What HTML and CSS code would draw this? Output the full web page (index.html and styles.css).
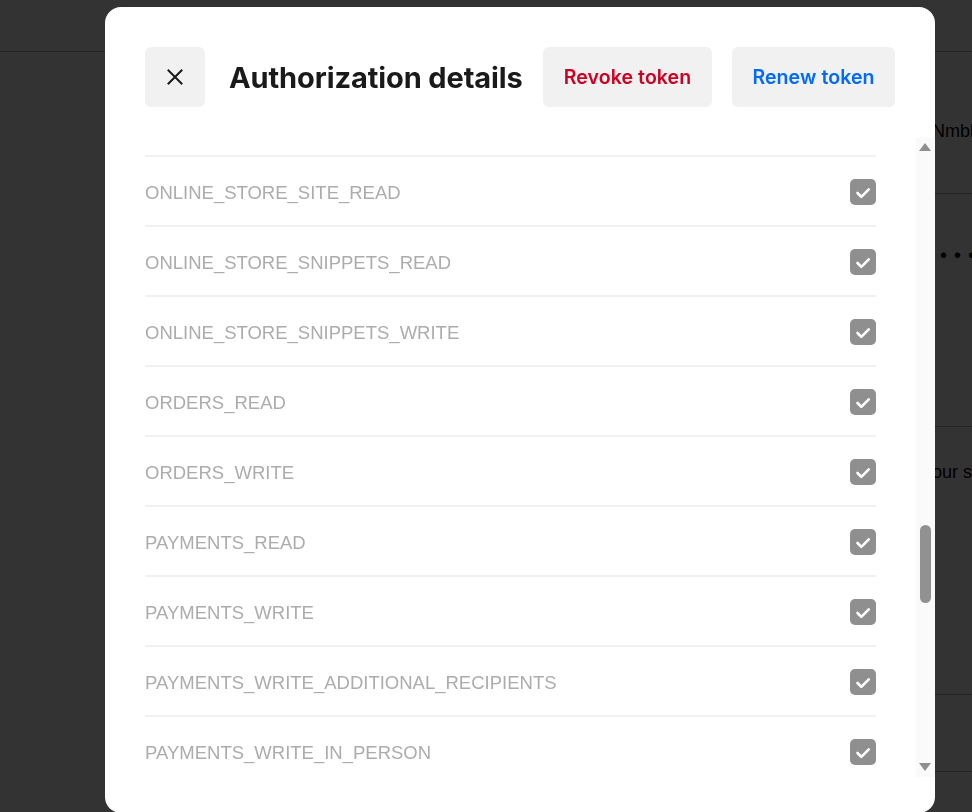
FILE: index.html
```html
<!DOCTYPE html>
<html lang="en">
<head>
<meta charset="utf-8">
<title>Authorization details</title>
<link rel="stylesheet" href="styles.css">
</head>
<body>
<div class="page">
  <header class="page-header"></header>
  <main class="page-main">
    <section class="pblock pblock-1"><span class="ptext">Nmbl</span></section>
    <section class="pblock pblock-2"><span class="pdots">•••</span></section>
    <section class="pblock pblock-3"><span class="ptext">our s</span></section>
    <section class="pblock pblock-4"></section>
  </main>
</div>

<div class="overlay">
  <div class="modal" role="dialog" aria-label="Authorization details">
    <div class="modal-header">
      <button class="icon-btn" aria-label="Close">
        <svg width="20" height="20" viewBox="0 0 20 20"><path d="M3.5 3.5 L16.5 16.5 M16.5 3.5 L3.5 16.5" stroke="#1a1a1a" stroke-width="2" fill="none" stroke-linecap="square"/></svg>
      </button>
      <h1 class="title">Authorization details</h1>
      <div class="actions">
        <button class="btn btn-revoke">Revoke token</button>
        <button class="btn btn-renew">Renew token</button>
      </div>
    </div>
    <div class="modal-body">
      <div class="viewport">
        <ul class="scopes">
          <li class="scope"><span>ONLINE_STORE_SITE_READ</span><svg class="check" width="26" height="26" viewBox="0 0 26 26"><rect width="26" height="26" rx="5" fill="#8f8f8f"/><path d="M7.5 14 L11.3 17.8 L18.8 10.3" stroke="#fff" stroke-width="2.6" fill="none" stroke-linecap="round" stroke-linejoin="round"/></svg></li>
          <li class="scope"><span>ONLINE_STORE_SNIPPETS_READ</span><svg class="check" width="26" height="26" viewBox="0 0 26 26"><rect width="26" height="26" rx="5" fill="#8f8f8f"/><path d="M7.5 14 L11.3 17.8 L18.8 10.3" stroke="#fff" stroke-width="2.6" fill="none" stroke-linecap="round" stroke-linejoin="round"/></svg></li>
          <li class="scope"><span>ONLINE_STORE_SNIPPETS_WRITE</span><svg class="check" width="26" height="26" viewBox="0 0 26 26"><rect width="26" height="26" rx="5" fill="#8f8f8f"/><path d="M7.5 14 L11.3 17.8 L18.8 10.3" stroke="#fff" stroke-width="2.6" fill="none" stroke-linecap="round" stroke-linejoin="round"/></svg></li>
          <li class="scope"><span>ORDERS_READ</span><svg class="check" width="26" height="26" viewBox="0 0 26 26"><rect width="26" height="26" rx="5" fill="#8f8f8f"/><path d="M7.5 14 L11.3 17.8 L18.8 10.3" stroke="#fff" stroke-width="2.6" fill="none" stroke-linecap="round" stroke-linejoin="round"/></svg></li>
          <li class="scope"><span>ORDERS_WRITE</span><svg class="check" width="26" height="26" viewBox="0 0 26 26"><rect width="26" height="26" rx="5" fill="#8f8f8f"/><path d="M7.5 14 L11.3 17.8 L18.8 10.3" stroke="#fff" stroke-width="2.6" fill="none" stroke-linecap="round" stroke-linejoin="round"/></svg></li>
          <li class="scope"><span>PAYMENTS_READ</span><svg class="check" width="26" height="26" viewBox="0 0 26 26"><rect width="26" height="26" rx="5" fill="#8f8f8f"/><path d="M7.5 14 L11.3 17.8 L18.8 10.3" stroke="#fff" stroke-width="2.6" fill="none" stroke-linecap="round" stroke-linejoin="round"/></svg></li>
          <li class="scope"><span>PAYMENTS_WRITE</span><svg class="check" width="26" height="26" viewBox="0 0 26 26"><rect width="26" height="26" rx="5" fill="#8f8f8f"/><path d="M7.5 14 L11.3 17.8 L18.8 10.3" stroke="#fff" stroke-width="2.6" fill="none" stroke-linecap="round" stroke-linejoin="round"/></svg></li>
          <li class="scope"><span>PAYMENTS_WRITE_ADDITIONAL_RECIPIENTS</span><svg class="check" width="26" height="26" viewBox="0 0 26 26"><rect width="26" height="26" rx="5" fill="#8f8f8f"/><path d="M7.5 14 L11.3 17.8 L18.8 10.3" stroke="#fff" stroke-width="2.6" fill="none" stroke-linecap="round" stroke-linejoin="round"/></svg></li>
          <li class="scope"><span>PAYMENTS_WRITE_IN_PERSON</span><svg class="check" width="26" height="26" viewBox="0 0 26 26"><rect width="26" height="26" rx="5" fill="#8f8f8f"/><path d="M7.5 14 L11.3 17.8 L18.8 10.3" stroke="#fff" stroke-width="2.6" fill="none" stroke-linecap="round" stroke-linejoin="round"/></svg></li>
        </ul>
      </div>
      <div class="scrollbar" aria-hidden="true">
        <div class="sb-btn sb-up"><span class="tri tri-up"></span></div>
        <div class="sb-track"><div class="sb-thumb"></div></div>
        <div class="sb-btn sb-down"><span class="tri tri-down"></span></div>
      </div>
    </div>
  </div>
</div>
</body>
</html>
```

FILE: styles.css
```css
* { box-sizing: border-box; }
html, body { margin: 0; padding: 0; }
body {
  width: 972px;
  height: 812px;
  overflow: hidden;
  background: #fff;
  font-family: "Inter", "Liberation Sans", sans-serif;
}

/* underlying page */
.page { width: 972px; }
.page-header {
  height: 52px;
  border-bottom: 1px solid #b4b4b4;
}
.page-main {
  margin-left: 600px;
}
.pblock {
  border-bottom: 1px solid #b4b4b4;
  padding-left: 332px;
  font-family: "Liberation Sans", sans-serif;
  font-size: 18px;
  color: #000;
  white-space: nowrap;
  overflow: hidden;
}
.pblock-1 { height: 142px; padding-top: 69px; }
.pblock-2 { height: 233px; padding-top: 50px; }
.pblock-3 { height: 268px; padding-top: 35px; }
.pblock-4 { height: 77px; }
.pdots {
  display: inline-block;
  font-size: 20px;
  letter-spacing: 7px;
  padding-left: 8px;
}

/* overlay + modal */
.overlay {
  position: fixed;
  inset: 0;
  background: rgba(0, 0, 0, 0.8);
  padding-top: 7px;
}
.modal {
  margin-left: 105px;
  width: 830px;
  height: 806px;
  background: #fff;
  border-radius: 16px;
  padding: 40px 0 36px 40px;
  display: flex;
  flex-direction: column;
}
.modal-header {
  display: flex;
  align-items: center;
  height: 60px;
  margin-right: 40px;
  flex: none;
}
.icon-btn {
  width: 60px;
  height: 60px;
  border: 0;
  border-radius: 6px;
  background: #f1f1f1;
  display: flex;
  align-items: center;
  justify-content: center;
  padding: 0;
}
.title {
  flex: 1;
  margin: 0 0 0 24px;
  font-size: 29px;
  font-weight: 700;
  color: #1a1a1a;
  letter-spacing: -0.1px;
  white-space: nowrap;
}
.actions {
  display: flex;
  gap: 20px;
}
.btn {
  height: 60px;
  border: 0;
  border-radius: 6px;
  background: #f1f1f1;
  font-family: "Inter", "Liberation Sans", sans-serif;
  font-size: 19.5px;
  font-weight: 600;
  letter-spacing: 0.1px;
  padding: 0;
}
.btn-revoke { color: #cc0023; width: 169px; }
.btn-renew { color: #006aff; width: 163px; }

.modal-body {
  margin-top: 30px;
  flex: 1;
  display: flex;
  min-height: 0;
}
.viewport {
  flex: 1;
  margin-right: 40px;
  overflow: hidden;
}
.scopes {
  list-style: none;
  margin: 0;
  padding: 18px 0 0 0;
}
.scope {
  height: 70px;
  border-top: 2px solid #f1f1f1;
  padding-top: 4px;
  display: flex;
  align-items: center;
  justify-content: space-between;
  font-family: "Liberation Sans", "Arial", sans-serif;
  font-size: 18.5px;
  color: #acacac;
}
.check { display: block; flex: none; margin-top: -3px; }

/* fake scrollbar */
.scrollbar {
  width: 19px;
  flex: none;
  background: #fafafa;
  display: flex;
  flex-direction: column;
}
.sb-btn {
  display: flex;
  justify-content: center;
}
.sb-up { height: 20px; padding-top: 6px; }
.sb-down { height: 19px; padding-top: 5px; }
.sb-track {
  flex: 1;
  display: flex;
  flex-direction: column;
  align-items: center;
}
.sb-thumb {
  margin-top: 368px;
  margin-left: -1px;
  width: 11px;
  height: 78px;
  border-radius: 6px;
  background: #919191;
}
.tri {
  width: 0;
  height: 0;
  border-left: 6.5px solid transparent;
  border-right: 6.5px solid transparent;
  margin-left: -1px;
}
.tri-up { border-bottom: 8px solid #8f8f8f; }
.tri-down { border-top: 8px solid #8f8f8f; }
```
